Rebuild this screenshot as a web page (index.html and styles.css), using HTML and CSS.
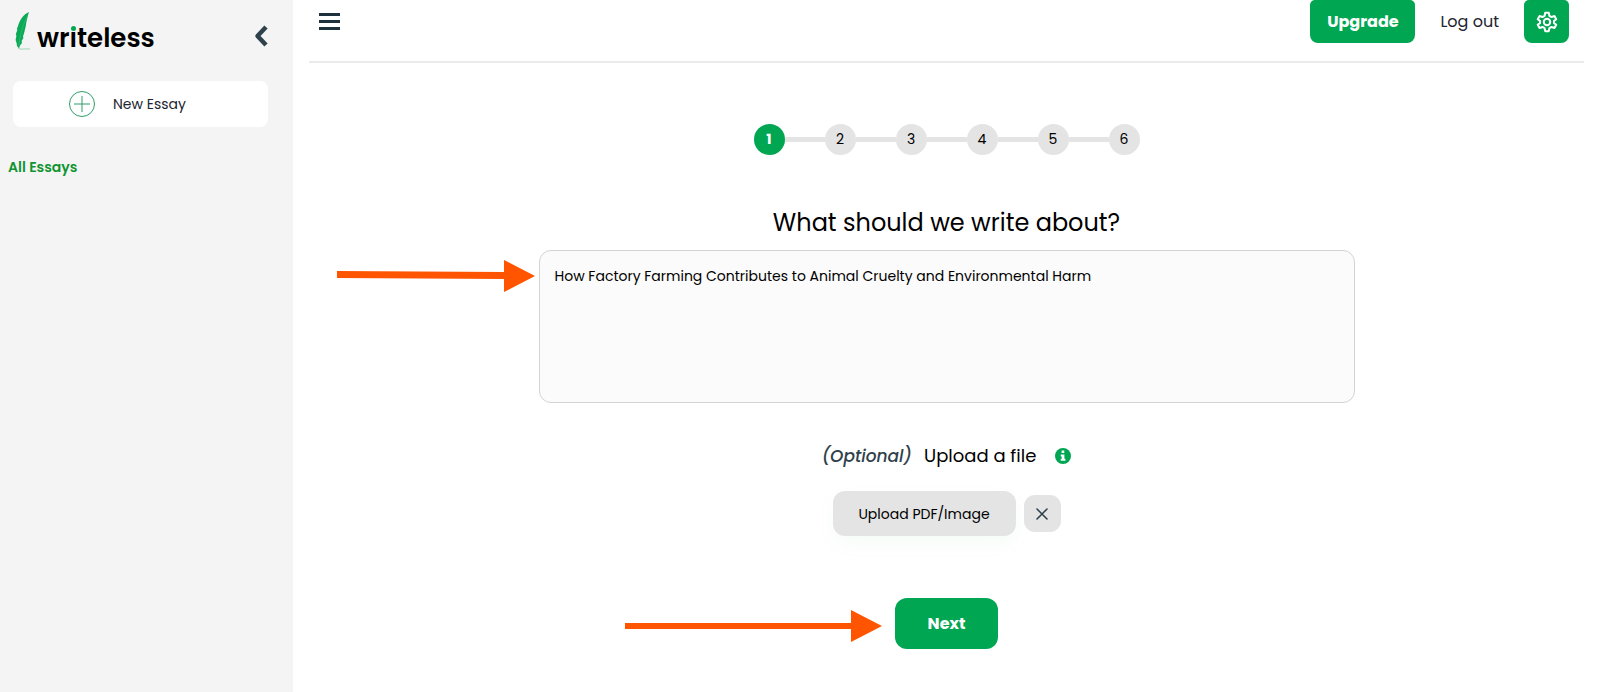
FILE: index.html
```html
<!DOCTYPE html>
<html lang="en">
<head>
<meta charset="utf-8">
<meta name="viewport" content="width=device-width, initial-scale=1">
<title>Writeless</title>
<link rel="stylesheet" href="styles.css">
</head>
<body>
<div class="app">
  <aside class="sidebar">
    <div class="sidebar-top">
      <a class="logo" href="#" aria-label="writeless">
        <svg class="feather" viewBox="0 0 16 38" aria-hidden="true">
          <path fill="#0caa57" d="M14 0C9 2 5 7 3 14L1.800 17L2.400 18L0.800 22L1.400 24L0.600 28L1.600 31L2 34L4 36.500L5 33.500L7 31L6.600 29L8.400 26L8 24.500L9.400 20L10.800 14C11.500 9 12.500 4 14 0Z"/>
          <path fill="none" stroke="#3cc07c" stroke-width=".6" d="M12.500 4C8 13 5 22 3.800 34"/>
          <path fill="none" stroke="#9ad9b8" stroke-width="1" d="M3 36C5 38 9 36.500 15 37"/>
        </svg>
        <span class="wordmark">wr<span class="dotted">ı</span>teless</span>
      </a>
      <button class="icon-button" type="button" aria-label="Collapse sidebar">
        <svg class="chevron" viewBox="0 0 14 22" aria-hidden="true"><path fill="none" stroke="#2f424c" stroke-width="4.500" stroke-linejoin="round" d="M12 2L3.500 11L12 20"/></svg>
      </button>
    </div>
    <button class="new-essay" type="button">
      <svg class="plus" viewBox="0 0 26 26" aria-hidden="true"><path fill="none" stroke="#2f9e6a" d="M13 .5a12.500 12.500 0 1 0 0 25a12.500 12.500 0 1 0 0-25M13 5v16M5 13h16"/></svg>
      New Essay
    </button>
    <a class="all-essays" href="#">All Essays</a>
  </aside>
  <div class="page">
    <header class="topbar">
      <button class="icon-button menu" type="button" aria-label="Menu">
        <svg class="bars" viewBox="0 0 21 17" aria-hidden="true"><path fill="#1c313c" d="M0 0h21v3H0zM0 7h21v3H0zM0 14h21v3H0z"/></svg>
      </button>
      <nav class="actions">
        <button class="primary upgrade" type="button">Upgrade</button>
        <a class="logout" href="#">Log out</a>
        <button class="primary settings" type="button" aria-label="Settings">
          <svg class="gear" viewBox="0 0 24 24" aria-hidden="true"><g fill="none" stroke="#fff" stroke-width="2.200" stroke-linejoin="round"><path d="M10 2h4l.6 3.200l2.400 1.400l3.100-1.100l2 3.400l-2.500 2.100v2l2.500 2.100l-2 3.400l-3.100-1.100l-2.400 1.400l-.6 3.200h-4l-.6-3.200l-2.400-1.400l-3.100 1.100l-2-3.400l2.500-2.100v-2l-2.500-2.100l2-3.400l3.100 1.100l2.400-1.400z"/><circle cx="12" cy="12" r="3.500"/></g></svg>
        </button>
      </nav>
    </header>
    <main class="content">
      <ol class="steps">
        <li class="step current" aria-current="step">1</li>
        <li class="step">2</li>
        <li class="step">3</li>
        <li class="step">4</li>
        <li class="step">5</li>
        <li class="step">6</li>
      </ol>
      <label class="question" for="topic">What should we write about?</label>
      <div class="topic-field">
        <svg class="arrow arrow-topic" viewBox="0 0 198 32" aria-hidden="true"><path fill="#ff5500" d="M0 11L167 12V0L198 16L167 32V19L0 18z"/></svg>
        <textarea class="topic" id="topic">How Factory Farming Contributes to Animal Cruelty and Environmental Harm</textarea>
      </div>
      <div class="upload-title">
        <em class="optional">(Optional)</em>
        <span class="upload-label">Upload a file</span>
        <svg class="info" viewBox="0 0 16 16" role="img" aria-label="Info"><circle cx="8" cy="8" r="8" fill="#00a651"/><path fill="#fff" d="M6.600 2.500h2.700v2.600H6.600zM5.700 6.500h3.700v4.300h1v1.900H5.700v-1.900h1V8.400h-1z"/></svg>
      </div>
      <div class="upload-row">
        <button class="upload" type="button">Upload PDF/Image</button>
        <button class="clear" type="button" aria-label="Remove file">
          <svg class="cross" viewBox="0 0 12 12" aria-hidden="true"><path fill="none" stroke="#2f424c" stroke-width="1.600" stroke-linecap="round" d="M1 1L11 11M11 1L1 11"/></svg>
        </button>
      </div>
      <div class="next-wrap">
        <svg class="arrow arrow-next" viewBox="0 0 257 32" aria-hidden="true"><path fill="#ff5500" d="M0 13H226V0L257 16L226 32V19H0z"/></svg>
        <button class="primary next" type="button">Next</button>
      </div>
    </main>
  </div>
</div>
</body>
</html>
```
FILE: styles.css
```css
* { box-sizing: border-box; }
body {
  margin: 0;
  background: #fff;
  color: #000;
  font-family: Poppins, Inter, "Liberation Sans", sans-serif;
  font-size: 14px;
  line-height: 24px;
}
button, textarea { font: inherit; color: inherit; border: 0; }
button { padding: 0; cursor: pointer; }
a { color: inherit; text-decoration: none; }
svg { display: block; flex: none; }

.app { display: flex; min-height: 100vh; }
.sidebar {
  flex: none;
  width: 293px;
  padding: 12px 25px 0 13px;
  background: #f4f4f4;
  display: flex;
  flex-direction: column;
}
.sidebar-top {
  display: flex;
  align-items: center;
  justify-content: space-between;
  height: 48px;
}
.logo { display: flex; align-items: flex-start; gap: 6px; padding-left: 2px; height: 48px; }
.feather { width: 16px; height: 38px; }
.wordmark { font-size: 26px; font-weight: 600; line-height: 52px; }
.dotted { position: relative; }
.dotted::before {
  content: "";
  position: absolute;
  left: 50%;
  top: 6px;
  width: 5px;
  height: 5px;
  margin-left: -2px;
  border-radius: 50%;
  background: #00a651;
}
.icon-button { background: none; }
.chevron { width: 14px; height: 22px; }
.new-essay {
  display: flex;
  align-items: center;
  gap: 18px;
  height: 46px;
  margin-top: 21px;
  padding-left: 56px;
  border-radius: 8px;
  background: #fff;
  color: #1c2530;
}
.plus { width: 26px; height: 26px; }
.all-essays {
  align-self: flex-start;
  margin: 28px 0 0 -5px;
  color: #0f9430;
  font-weight: 600;
}

.page { flex: 1; min-width: 0; padding: 0 16px; }
.topbar {
  display: flex;
  align-items: flex-start;
  justify-content: space-between;
  height: 63px;
  padding: 0 15px 0 10px;
  border-bottom: 2px solid #ebebeb;
}
.menu { padding-top: 13px; }
.bars { width: 21px; height: 17px; }
.actions { display: flex; align-items: center; gap: 25px; }
.primary { background: #00a651; color: #fff; font-size: 16px; font-weight: 700; }
.upgrade { width: 105px; height: 43px; border-radius: 5px 5px 8px 8px; }
.logout { font-size: 16px; color: #1c2530; }
.settings { display: grid; place-items: center; width: 45px; height: 43px; border-radius: 5px 5px 8px 8px; }
.gear { width: 22px; height: 22px; }

.content { display: flex; flex-direction: column; align-items: center; padding: 61px 0 40px; }
.steps { display: flex; gap: 40px; margin: 0; padding: 0; list-style: none; }
.step {
  position: relative;
  width: 31px;
  height: 31px;
  border-radius: 50%;
  background: #e4e4e4;
  text-align: center;
  line-height: 30px;
}
.step + .step::before {
  content: "";
  position: absolute;
  right: 100%;
  top: 13px;
  width: 40px;
  height: 5px;
  background: #e4e4e4;
}
.current { background: #00a651; color: #fff; font-weight: 700; }
.question { margin-top: 50px; font-size: 24px; line-height: 36px; }
.topic-field { position: relative; width: 64%; margin-top: 9px; }
.topic {
  display: block;
  width: 100%;
  height: 153px;
  padding: 13px 15px;
  border: 1px solid #d3d3d3;
  border-radius: 12px;
  background: #fbfbfb;
  resize: none;
}
.arrow { position: absolute; height: 32px; }
.arrow-topic { right: 100%; top: 10px; width: 198px; margin-right: 4px; }
.arrow-next { right: 100%; top: 12px; width: 257px; margin-right: 13px; }
.upload-title { display: flex; align-items: center; margin-top: 39px; line-height: 28px; }
.optional { color: #2f424c; font-size: 17px; font-weight: 500; }
.upload-label { margin: 0 19px 0 12px; font-size: 18px; }
.info { width: 16px; height: 16px; }
.upload-row { display: flex; align-items: center; gap: 8px; margin-top: 21px; }
.upload {
  width: 183px;
  height: 45px;
  border-radius: 12px;
  background: #e4e4e4;
  box-shadow: 0 8px 20px rgba(0, 166, 81, .04);
}
.clear { display: grid; place-items: center; width: 37px; height: 37px; border-radius: 11px; background: #e4e4e4; }
.cross { width: 12px; height: 12px; }
.next-wrap { position: relative; margin-top: 62px; }
.next { width: 103px; height: 51px; border-radius: 12px; }
```
